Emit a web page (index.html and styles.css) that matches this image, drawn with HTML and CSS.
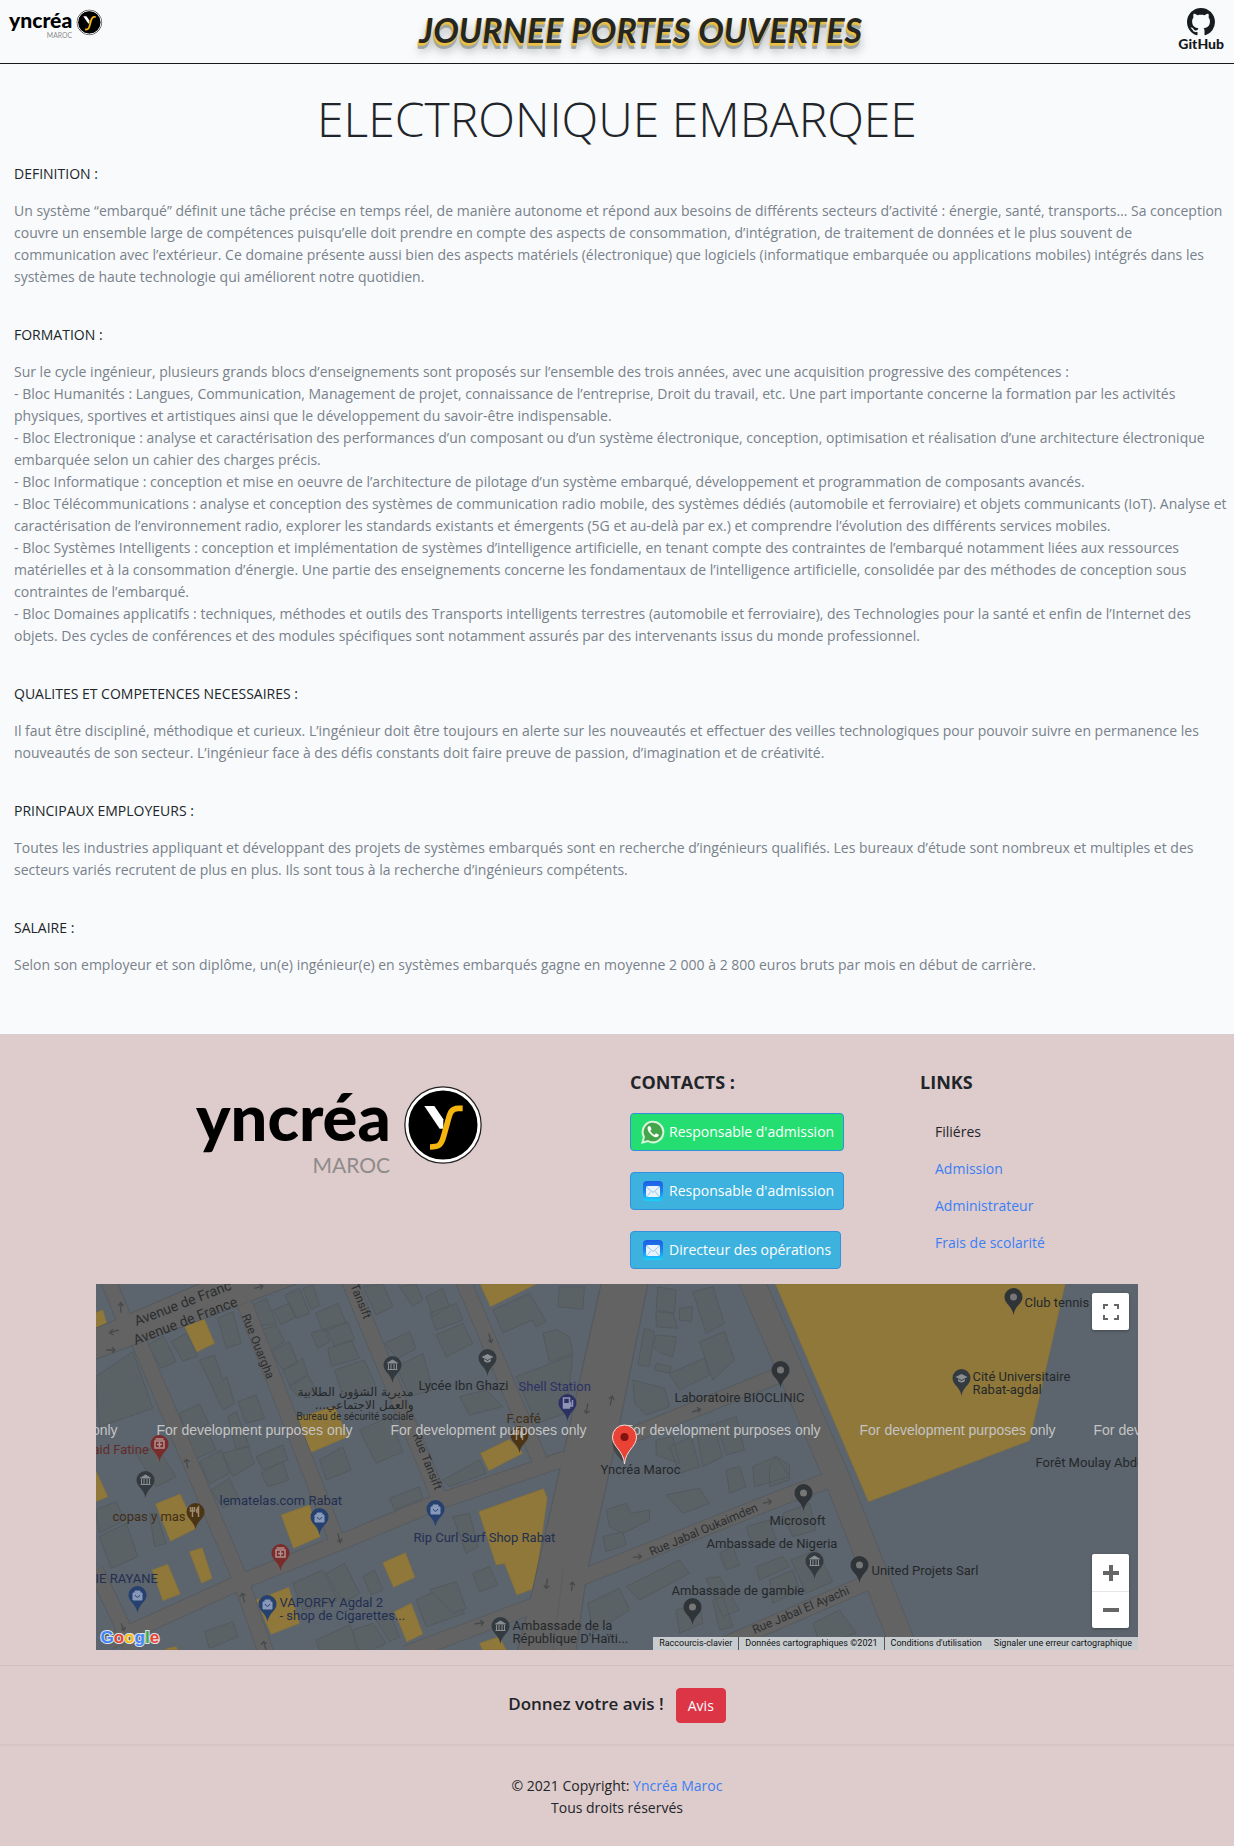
FILE: index.html
```html
<!DOCTYPE html>
<html lang="fr">
<head>
<meta charset="utf-8">
<meta name="viewport" content="width=device-width, initial-scale=1">
<title>Journée portes ouvertes - Yncréa Maroc</title>
<link rel="stylesheet" href="styles.css">
</head>
<body>
<svg class="defs" width="0" height="0" aria-hidden="true">
  <defs>
    <symbol id="yncrea" viewBox="0 0 292 92">
      <text class="brand-name" x="3" y="57">yncréa</text>
      <text class="brand-sub" x="197" y="89" text-anchor="end">MAROC</text>
      <circle cx="250" cy="41" r="38" fill="#000" stroke="#222" stroke-width="1.5"/>
      <circle cx="250" cy="41" r="36" fill="#000" stroke="#fff" stroke-width="3"/>
      <g transform="translate(-14 -24) scale(.33333)">
        <path d="M736 138H766L793 178V206H782Z" fill="#fff"/>
        <path d="M851 145H838C817 145 813 158 806 185L795 225C787 256 780 261 753 261" fill="none" stroke="#f5b40e" stroke-width="17"/>
      </g>
    </symbol>
    <symbol id="mail" viewBox="0 0 20 20">
      <rect width="20" height="20" rx="4" fill="url(#mail-bg)"/>
      <rect x="3" y="5" width="14" height="11" rx="2" fill="#e8f4fd"/>
      <path d="M3.500 6L10 11.500L16.500 6M4 15.500L8 10.500M16 15.500L12 10.500" fill="none" stroke="#9fc6e8"/>
    </symbol>
    <linearGradient id="mail-bg" x1="0" y1="0" x2="0" y2="1"><stop offset="0" stop-color="#1d5fe6"/><stop offset=".5" stop-color="#1c80ee"/><stop offset="1" stop-color="#1bd3fb"/></linearGradient>
    <path id="pin" d="M0 0C-1 -9 -9 -11 -9 -18a9 9 0 1 1 18 0C9 -11 1 -9 0 0z"/>
    <g id="pin-dot"><use href="#pin" fill="#2f3438"/><circle cy="-18" r="3.500" fill="#777"/></g>
    <g id="pin-bank"><use href="#pin" fill="#343b40"/><path d="M-5 -20L0 -23L5 -20ZM-4 -19V-14M-1.500 -19V-14M1.500 -19V-14M4 -19V-14M-5 -13.500H5" fill="#8a8f92" stroke="#8a8f92"/></g>
    <g id="pin-school"><use href="#pin" fill="#343b40"/><path d="M-6 -19L0 -22L6 -19L0 -16ZM-3.500 -17V-15Q0 -12 3.500 -15V-17L0 -15Z" fill="#8a8f92"/></g>
    <g id="pin-shop"><use href="#pin" fill="#26406f"/><path d="M-4.500 -20H4.500V-13H-4.500ZM-2.500 -20V-22H2.500V-20" fill="#8898b8" stroke="#8898b8"/><path d="M-2.500 -18Q0 -13.500 2.500 -18" fill="none" stroke="#26406f"/></g>
    <g id="pin-health"><use href="#pin" fill="#7a2c2a"/><path d="M-4.500 -14V-21H4.500V-14ZM0 -20V-15M-2.500 -17.500H2.500M-4 -23H4" fill="none" stroke="#b09090" stroke-width="1.500"/></g>
    <g id="pin-food"><use href="#pin" fill="#4c3514"/><path d="M-3 -23V-13M-5 -23V-19H-1V-23M3 -13V-23Q0 -20 2 -17" fill="none" stroke="#a08c70" stroke-width="1.500"/></g>
    <g id="pin-fuel"><use href="#pin" fill="#2c3163"/><path d="M-4 -13V-23H2V-13ZM3 -19V-15H5V-21" fill="none" stroke="#9094b4" stroke-width="1.500"/><path d="M-4 -18H2V-13H-4Z" fill="#9094b4"/></g>
  </defs>
</svg>

<header class="topbar">
  <a href="#" aria-label="Yncréa Maroc"><svg class="topbar-logo"><use href="#yncrea"/></svg></a>
  <div class="topbar-title">JOURNEE PORTES OUVERTES</div>
  <a class="github" href="#">
    <svg viewBox="0 0 16 16" width="28" height="28" aria-hidden="true"><path fill="#181b1f" d="M8 0C3.580 0 0 3.580 0 8c0 3.540 2.290 6.530 5.470 7.590.4.070.55-.17.55-.38 0-.19-.010-.82-.010-1.490-2.010.37-2.530-.49-2.690-.94-.090-.23-.48-.94-.82-1.130-.28-.15-.68-.52-.010-.53.63-.010 1.080.58 1.230.82.72 1.210 1.870.87 2.330.66.070-.52.28-.87.51-1.070-1.780-.2-3.640-.89-3.640-3.950 0-.87.31-1.590.82-2.150-.080-.2-.36-1.020.080-2.120 0 0 .67-.21 2.200.82.64-.18 1.320-.27 2-.27s1.360.090 2 .27c1.530-1.040 2.200-.82 2.200-.82.44 1.100.16 1.920.080 2.120.51.56.82 1.270.82 2.150 0 3.070-1.870 3.750-3.650 3.950.29.25.54.73.54 1.480 0 1.070-.010 1.930-.010 2.200 0 .21.15.46.55.38A8.010 8.010 0 0 0 16 8c0-4.420-3.580-8-8-8z"/></svg>
    <span>GitHub</span>
  </a>
</header>

<main class="content">
  <h1>ELECTRONIQUE EMBARQEE</h1>
  <section>
    <h2>DEFINITION :</h2>
    <p>Un système “embarqué” définit une tâche précise en temps réel, de manière autonome et répond aux besoins de différents secteurs d’activité : énergie, santé, transports… Sa conception couvre un ensemble large de compétences puisqu’elle doit prendre en compte des aspects de consommation, d’intégration, de traitement de données et le plus souvent de communication avec l’extérieur. Ce domaine présente aussi bien des aspects matériels (électronique) que logiciels (informatique embarquée ou applications mobiles) intégrés dans les systèmes de haute technologie qui améliorent notre quotidien.</p>
  </section>
  <section>
    <h2>FORMATION :</h2>
    <p>Sur le cycle ingénieur, plusieurs grands blocs d’enseignements sont proposés sur l’ensemble des trois années, avec une acquisition progressive des compétences :<br>
    - Bloc Humanités : Langues, Communication, Management de projet, connaissance de l’entreprise, Droit du travail, etc. Une part importante concerne la formation par les activités physiques, sportives et artistiques ainsi que le développement du savoir-être indispensable.<br>
    - Bloc Electronique : analyse et caractérisation des performances d’un composant ou d’un système électronique, conception, optimisation et réalisation d’une architecture électronique embarquée selon un cahier des charges précis.<br>
    - Bloc Informatique : conception et mise en oeuvre de l’architecture de pilotage d’un système embarqué, développement et programmation de composants avancés.<br>
    - Bloc Télécommunications : analyse et conception des systèmes de communication radio mobile, des systèmes dédiés (automobile et ferroviaire) et objets communicants (IoT). Analyse et caractérisation de l’environnement radio, explorer les standards existants et émergents (5G et au-delà par ex.) et comprendre l’évolution des différents services mobiles.<br>
    - Bloc Systèmes Intelligents : conception et implémentation de systèmes d’intelligence artificielle, en tenant compte des contraintes de l’embarqué notamment liées aux ressources matérielles et à la consommation d’énergie. Une partie des enseignements concerne les fondamentaux de l’intelligence artificielle, consolidée par des méthodes de conception sous contraintes de l’embarqué.<br>
    - Bloc Domaines applicatifs : techniques, méthodes et outils des Transports intelligents terrestres (automobile et ferroviaire), des Technologies pour la santé et enfin de l’Internet des objets. Des cycles de conférences et des modules spécifiques sont notamment assurés par des intervenants issus du monde professionnel.</p>
  </section>
  <section>
    <h2>QUALITES ET COMPETENCES NECESSAIRES :</h2>
    <p>Il faut être discipliné, méthodique et curieux. L’ingénieur doit être toujours en alerte sur les nouveautés et effectuer des veilles technologiques pour pouvoir suivre en permanence les nouveautés de son secteur. L’ingénieur face à des défis constants doit faire preuve de passion, d’imagination et de créativité.</p>
  </section>
  <section>
    <h2>PRINCIPAUX EMPLOYEURS :</h2>
    <p>Toutes les industries appliquant et développant des projets de systèmes embarqués sont en recherche d’ingénieurs qualifiés. Les bureaux d’étude sont nombreux et multiples et des secteurs variés recrutent de plus en plus. Ils sont tous à la recherche d’ingénieurs compétents.</p>
  </section>
  <section>
    <h2>SALAIRE :</h2>
    <p>Selon son employeur et son diplôme, un(e) ingénieur(e) en systèmes embarqués gagne en moyenne 2 000 à 2 800 euros bruts par mois en début de carrière.</p>
  </section>
</main>

<footer class="footer">
  <div class="footer-grid">
    <svg class="footer-logo" role="img" aria-label="Yncréa Maroc"><use href="#yncrea"/></svg>
    <div class="contacts">
      <h3>CONTACTS :</h3>
      <button class="btn btn-whatsapp" type="button">
        <svg width="24" height="24" viewBox="0 0 24 24" aria-hidden="true"><path d="M1.500 22.500L3 17A10.300 10.300 0 1 1 7 21Z" fill="#43a64b" stroke="#d9f3dc" stroke-width="2"/><path d="M8 6C6 7 6 10 9 13.500C12 17 15 18 17 16.500C18 15.500 18 15 17.500 14.500L15 13.300L13.500 15C12 14.500 10 12.500 9.300 10.800L10.500 9.200L9.500 6.500Z" fill="#fff"/></svg>
        Responsable d'admission</button>
      <button class="btn btn-mail" type="button"><svg width="20" height="20" aria-hidden="true"><use href="#mail"/></svg>Responsable d'admission</button>
      <button class="btn btn-mail" type="button"><svg width="20" height="20" aria-hidden="true"><use href="#mail"/></svg>Directeur des opérations</button>
    </div>
    <nav class="links">
      <h3>LINKS</h3>
      <ul>
        <li>Filiéres</li>
        <li><a href="#">Admission</a></li>
        <li><a href="#">Administrateur</a></li>
        <li><a href="#">Frais de scolarité</a></li>
      </ul>
    </nav>
  </div>

  <div class="map">
    <svg class="map-canvas" viewBox="0 0 1043 366" preserveAspectRatio="xMidYMid slice">
      <g transform="translate(-6 -4) scale(.33333)">
        <g class="buildings">
          <path d="M18 290L130 215L190 385L30 440ZM175 195L222 168L260 245L215 265ZM245 185L290 160L325 228L280 243ZM385 115L430 95L455 190L410 205ZM330 240L375 225L400 300L412 290L435 370L400 390ZM270 400L330 372L358 430L290 460ZM280 470L345 435L380 510L310 540ZM415 410L440 395L480 500L440 510ZM445 365L500 345L525 415L470 430ZM330 545L395 510L420 580L360 612ZM400 520L475 498L495 550L430 590ZM500 530L580 495L595 540L520 570ZM515 580L580 545L598 600L535 620ZM365 630L420 595L450 660L400 685ZM140 520L200 500L260 590L200 620ZM18 690L80 665L105 720L30 760ZM30 770L110 730L145 830L65 865ZM180 700L200 700L230 790L195 800Z"/>
          <path d="M480 80L530 55L560 130L500 140ZM550 90L600 70L620 110L575 135ZM585 45L630 25L660 100L620 115ZM640 25L670 15L690 75L665 90ZM515 150L560 135L585 185L545 210ZM545 215L600 185L625 250L580 270ZM580 270L640 235L655 285L600 315ZM600 320L655 285L680 330L625 350ZM678 100L745 70L770 130L700 155ZM665 160L705 145L720 185L685 205ZM710 145L775 125L795 180L735 200ZM715 205L785 180L810 235L725 258ZM735 270L825 240L860 320L760 350ZM820 20L880 12L910 80L860 105ZM885 190L960 155L980 205L925 235ZM920 260L1000 220L1030 330L960 350ZM930 20L980 12L1000 60L970 80ZM1010 50L1060 25L1080 80L1030 110ZM1020 100L1100 70L1120 120L1040 150ZM1040 165L1120 130L1150 190L1070 230ZM810 450L900 410L940 515L860 550ZM690 540L760 500L785 570L710 600ZM900 655L990 620L1000 655L915 690ZM610 910L700 870L745 960L640 990ZM710 880L765 850L810 940L760 970ZM820 890L855 870L880 930L845 945ZM345 1055L430 1025L445 1070L360 1105ZM680 1080L780 1035L810 1110H690ZM790 1050L850 1030L890 1090L850 1110H800ZM860 1020L900 1000L930 1070L900 1085ZM980 960L1080 915L1125 1000L1010 1040Z"/>
          <path d="M1210 90L1320 40L1370 125L1340 140L1330 120L1240 158ZM1410 20H1485L1480 88L1405 80ZM1360 160L1400 148L1440 170L1450 220L1380 245ZM1280 290L1450 225L1430 400L1340 430ZM1110 350L1190 330L1240 380L1140 405ZM1060 600L1170 540L1190 580L1080 620ZM1090 710L1140 700L1165 800L1130 820ZM1150 880L1200 860L1225 915L1170 935ZM1020 930L1100 905L1130 985L1090 1000ZM1705 20L1760 30L1755 100L1700 90ZM1700 95L1750 100L1765 145L1700 140ZM1770 85L1810 80L1805 125L1770 120ZM1810 35L1870 20L1905 130L1850 160ZM1665 145L1695 155L1680 260L1645 255ZM1700 165L1760 170L1750 230L1715 220L1690 200ZM1700 250L1745 260L1740 280L1695 270ZM1740 280L1845 235L1860 285L1770 330ZM1830 185L1905 155L1935 240L1870 300ZM1630 300L1725 325L1740 380L1670 405L1635 370ZM1700 480L1750 470L1770 550L1700 525ZM1740 500L1805 470L1830 560L1770 580ZM1820 450L1870 430L1900 530L1840 560ZM1880 430L1940 410L1965 510L1910 525ZM1910 570L1950 560L1970 620L1920 640ZM1990 560L2060 530L2100 590L1995 620ZM1730 645L1830 625L1860 670L1780 700ZM1550 690L1610 670L1625 700L1680 690V720L1600 760L1560 740ZM1540 770L1600 755L1610 795L1550 815ZM1495 970L1590 925L1620 990L1510 1060ZM1610 920L1770 840L1800 880L1650 960ZM1850 895L1890 890L1950 990L1900 1010ZM1870 960L1900 950L1930 1040L1890 1050ZM1760 990L1830 970L1840 1030L1770 1060ZM1970 740L2040 720L2060 780L1990 800ZM1890 820L1930 800L1950 855L1910 870ZM2000 860L2080 830L2100 860L2010 900ZM2040 900L2110 870L2130 930L2050 970ZM2040 560L2060 530L2100 555V600L2040 620ZM2080 700L2160 670L2180 750L2110 770ZM2105 840L2180 810L2230 905L2150 940ZM2170 1030L2250 990L2300 1060L2190 1090Z"/>
        </g>
        <g class="yellow">
          <path d="M18 98L40 90L52 130L18 148ZM286 140L342 112L375 190L322 216ZM18 570L55 650L18 665ZM198 672L272 642L320 745L243 784ZM300 815L338 803L368 895L336 910ZM188 870L235 853L272 942L220 962ZM575 705L660 675L692 770L612 805ZM618 415L735 380L775 470L662 518ZM500 960L598 922L630 1030L545 1063ZM880 848L948 818L976 892L912 922ZM915 995L965 970L1000 1062L952 1085ZM235 1105L260 1100L265 1110H225Z"/>
          <path d="M1172 12H1340L1203 80ZM1173 520L1260 478L1300 520L1198 572ZM1168 695L1362 626L1373 655L1335 925L1282 945L1245 850L1220 855ZM1170 1090L1230 1070L1250 1110H1180Z"/>
          <path d="M2058 12H2927L2820 482L2337 665Z"/>
        </g>
        <g class="road-edge">
          <path d="M18 145L330 12H620L18 238Z"/>
          <path d="M1535 12H1675L1580 480L1490 890L1460 1110H1285L1320 970L1420 530Z"/>
        </g>
        <g class="roads roads-edge-line">
          <path d="M55 0L105 120M150 190L455 905L530 1120M465 70L745 790M778 0L1060 680M1120 0L1350 540M18 870L105 1050L130 1120M60 1085L455 905L745 790L1060 660L1430 535M950 1120L1350 970M1590 480L2120 265M1470 895L2070 655L2220 600M1890 1100L2340 905"/>
          <path class="wide" d="M1985 0L2245 600L2450 1120"/>
        </g>
        <g class="roads">
          <path d="M55 0L105 120M150 190L455 905L530 1120M465 70L745 790M778 0L1060 680M1120 0L1350 540M18 870L105 1050L130 1120M60 1085L455 905L745 790L1060 660L1430 535M950 1120L1350 970M1590 480L2120 265M1470 895L2070 655L2220 600M1890 1100L2340 905"/>
          <path class="wide" d="M1985 0L2245 600L2450 1120"/>
        </g>
        <g class="road-fill"><path d="M18 147L334 12H616L18 236Z"/><path d="M1537 12H1673L1578 480L1488 890L1458 1110H1287L1322 970L1422 530Z"/></g>
        <path class="road-seam" d="M1422 870L1390 1110"/>
        <g class="arrows">
          <path d="M94 98V68M86 78L94 68L102 78M88 150L60 158M70 148L60 158L72 165M50 210H76M68 202L76 210L68 218M495 25L520 18M510 12L520 18L514 28M295 565L290 538M283 548L290 538L300 545M745 760L752 788M744 780L752 788L758 776M95 1030L103 1052M95 1046L103 1052L108 1040M465 968L458 940M451 950L458 940L468 946M530 1110L522 1085M515 1094L522 1085L531 1091M1198 160L1205 188M1196 180L1205 188L1210 176M1495 370L1490 400M1484 390L1490 400L1500 393M1562 376L1568 348M1558 356L1568 348L1574 360M1808 396L1833 388M1822 382L1833 388L1826 398M2020 670L2045 664M2034 657L2045 664L2038 674M1630 832L1656 829M1645 822L1656 829L1647 838M1374 895L1370 925M1363 915L1370 925L1380 918M1446 933L1449 906M1441 914L1449 906L1456 916M1155 1032L1182 1028M1172 1021L1182 1028L1174 1038"/>
        </g>
      </g>

      <g class="labels">
        <text class="road-name big" transform="translate(41 42) rotate(-21)">Avenue de Franc</text>
        <text class="road-name big" transform="translate(40 61) rotate(-21)">Avenue de France</text>
        <text class="road-name" transform="translate(146 32) rotate(68)">Rue Ouargha</text>
        <text class="road-name" transform="translate(246 -20) rotate(68)">Rue Tansift</text>
        <text class="road-name" transform="translate(317 151) rotate(68)">Rue Tansift</text>
        <text class="road-name" transform="translate(556 272) rotate(-23)">Rue Jabal Oukaimden</text>
        <text class="road-name" transform="translate(659 350) rotate(-23)">Rue Jabal El Ayachi</text>
        <text x="318" y="112" class="arabic" direction="rtl">مديرية الشؤون الطلابية</text>
        <text x="318" y="125" class="arabic" direction="rtl">والعمل الاجتماعي...</text>
        <text x="318" y="136" text-anchor="end" class="small">Bureau de sécurité sociale</text>
        <text x="323" y="106">Lycée Ibn Ghazi</text>
        <text x="423" y="107" class="indigo">Shell Station</text>
        <text x="411" y="139" class="brown">F.café</text>
        <text x="-3" y="170" class="red">aid Fatine</text>
        <text x="17" y="237" class="brown">copas y mas</text>
        <text x="124" y="221" class="blue">lematelas.com Rabat</text>
        <text x="0" y="299" class="blue">IE RAYANE</text>
        <text x="184" y="323" class="blue">VAPORFY Agdal 2</text>
        <text x="184" y="336" class="blue">- shop de Cigarettes...</text>
        <text x="318" y="258" class="blue">Rip Curl Surf Shop Rabat</text>
        <text x="417" y="346">Ambassade de la</text>
        <text x="417" y="359">République D'Haïti...</text>
        <text x="505" y="190">Yncréa Maroc</text>
        <text x="579" y="118">Laboratoire BIOCLINIC</text>
        <text x="674" y="241">Microsoft</text>
        <text x="611" y="264">Ambassade de Nigeria</text>
        <text x="576" y="311">Ambassade de gambie</text>
        <text x="776" y="291">United Projets Sarl</text>
        <text x="929" y="23">Club tennis</text>
        <text x="877" y="97">Cité Universitaire</text>
        <text x="877" y="110">Rabat-agdal</text>
        <text x="940" y="183">Forêt Moulay Abdellah</text>
      </g>
      <use href="#pin-bank" x="297" y="99"/><use href="#pin-bank" x="50" y="214"/><use href="#pin-bank" x="405" y="360"/><use href="#pin-bank" x="719" y="295"/>
      <use href="#pin-school" x="392" y="92"/><use href="#pin-school" x="866" y="112"/>
      <use href="#pin-dot" x="597" y="341"/><use href="#pin-dot" x="685" y="104"/><use href="#pin-dot" x="708" y="227"/><use href="#pin-dot" x="764" y="299"/><use href="#pin-dot" x="918" y="31"/>
      <use href="#pin-health" x="64" y="178"/><use href="#pin-health" x="185" y="287"/>
      <use href="#pin-food" x="100" y="246"/><use href="#pin-food" x="424" y="169"/>
      <use href="#pin-shop" x="42" y="329"/><use href="#pin-shop" x="224" y="251"/><use href="#pin-shop" x="340" y="243"/><use href="#pin-shop" x="172" y="338"/>
      <use href="#pin-fuel" x="472" y="137"/>
      <g class="watermark">
        <text x="-174" y="151">For development purposes only</text>
        <text x="61" y="151">For development purposes only</text>
        <text x="295" y="151">For development purposes only</text>
        <text x="529" y="151">For development purposes only</text>
        <text x="764" y="151">For development purposes only</text>
        <text x="998" y="151">For development purposes only</text>
      </g>
      <path d="M529 179C518 170 514 160 519 150L529 160Z" fill="#333" opacity=".6"/>
      <path d="M529 180C528 166 517 163 517 153a12 12 0 1 1 24 0C541 163 530 166 529 180Z" fill="#ea4335" stroke="#f5dcd8"/>
      <circle cx="529" cy="153" r="4" fill="#811411"/>
      <text class="google" x="5" y="359"><tspan fill="#4285f4">G</tspan><tspan fill="#ea4335">o</tspan><tspan fill="#fbbc05">o</tspan><tspan fill="#4285f4">g</tspan><tspan fill="#34a853">l</tspan><tspan fill="#ea4335">e</tspan></text>
    </svg>
    <button class="map-full" type="button" aria-label="Plein écran"><svg width="18" height="18" viewBox="0 0 18 18"><path d="M2 6V2H6M12 2H16V6M16 12V16H12M6 16H2V12" fill="none" stroke="#666" stroke-width="2"/></svg></button>
    <div class="map-zoom">
      <button type="button" aria-label="Zoom avant"><svg width="18" height="18" viewBox="0 0 18 18"><path d="M1 9H17M9 1V17" stroke="#666" stroke-width="4"/></svg></button>
      <button type="button" aria-label="Zoom arrière"><svg width="18" height="18" viewBox="0 0 18 18"><path d="M1 9H17" stroke="#666" stroke-width="4"/></svg></button>
    </div>
    <div class="map-legal">
      <a href="#">Raccourcis-clavier</a><span>Données cartographiques ©2021</span><a href="#">Conditions d'utilisation</a><a class="plain" href="#">Signaler une erreur cartographique</a>
    </div>
  </div>

  <div class="review">
    <span>Donnez votre avis !</span>
    <button class="btn btn-danger" type="button">Avis</button>
  </div>
  <div class="copyright">© 2021 Copyright: <a href="#">Yncréa Maroc</a><br>Tous droits réservés</div>
</footer>
</body>
</html>
```
FILE: styles.css
```css
* { box-sizing: border-box; }

body {
  margin: 0;
  background: #f8fafc;
  color: #212529;
  font-family: "Open Sans", "Noto Sans", sans-serif;
  font-size: 14px;
  line-height: 22px;
}

a { color: #3b7ff5; text-decoration: none; }
h1, h2, h3, p, ul { margin: 0; padding: 0; }
.defs { position: absolute; }

.brand-name { font: 900 65px Lato, sans-serif; fill: #000; }
.brand-sub { font: 400 21px Lato, sans-serif; fill: #8f8b8c; }

.topbar {
  display: flex;
  justify-content: space-between;
  align-items: flex-start;
  height: 64px;
  padding: 8px 10px 0 8px;
  border-bottom: 1px solid #16191c;
}
.topbar-logo { display: block; width: 95px; height: 32px; }
.topbar-title {
  font: italic 700 34px/44px Lato, sans-serif;
  color: #25261f;
  text-shadow: 0 1px 0 #e8c048, -1px 2px 0 #e8c048, -1px 3px 0 #d9b752, -1px 5px 0 #9da6a2, -1px 6px 0 #a5aca9, 0 8px 10px rgba(0, 0, 0, .35);
}
.github {
  display: flex;
  flex-direction: column;
  align-items: center;
  color: #16191c;
  font: 900 14px/16px Lato, sans-serif;
}

.content { padding: 23px 4px 58px 14px; }
.content h1 {
  margin-bottom: 12px;
  padding-right: 10px;
  font-size: 48px;
  font-weight: 300;
  line-height: 64px;
  text-align: center;
}
.content h2 { margin-bottom: 15px; font-size: 14px; font-weight: 400; line-height: 22px; }
.content section + section { margin-top: 36px; }
.content p { color: #79818a; }

.footer { background: #decbcb; border-top: 1px solid #d8cccd; }
.footer-grid {
  display: grid;
  grid-template-columns: 630fr 290fr 314fr;
  padding-top: 35px;
}
.footer-logo { width: 292px; height: 92px; margin-top: 14px; justify-self: center; margin-left: 48px; }
.footer h3 { font-size: 18px; font-weight: 700; line-height: 24px; }
.contacts { display: flex; flex-direction: column; align-items: flex-start; gap: 21px; padding-bottom: 15px; }

.btn {
  display: inline-flex;
  align-items: center;
  border: 1px solid #3490dc;
  border-radius: 4px;
  color: #fff;
  font: 14px/22px "Open Sans", "Noto Sans", sans-serif;
  cursor: pointer;
}
.contacts .btn { height: 38px; }
.btn-whatsapp { gap: 4px; margin-top: -2px; padding: 0 9px 0 10px; background: #25de72; }
.btn-mail { gap: 6px; padding: 0 9px 0 12px; background: #3db2de; }
.btn-danger { height: 35px; padding: 0 11px; background: #dc3546; border-color: #dc3546; }

.links ul { margin-top: 20px; padding-left: 15px; list-style: none; }
.links li { padding: 7px 0; margin-bottom: 1px; }

.map { position: relative; height: 366px; margin: 0 96px; overflow: hidden; background: #5c646d; }
.map-canvas { display: block; width: 100%; height: 100%; }
.buildings { fill: #5b6266; stroke: #535a5e; stroke-width: 3; }
.yellow { fill: #8f7839; stroke: #84713c; stroke-width: 2; }
.roads { fill: none; stroke: #636363; stroke-width: 44; }
.roads .wide { stroke-width: 74; }
.roads-edge-line { stroke: #565a5e; stroke-width: 49; }
.roads-edge-line .wide { stroke-width: 79; }
.road-edge { fill: #636363; stroke: #565a5e; stroke-width: 4; }
.road-fill { fill: #636363; }
.road-seam { stroke: #5a5d60; stroke-width: 3; }
.arrows { fill: none; stroke: #474a4c; stroke-width: 4; }
.labels text { font: 13px Roboto, sans-serif; fill: #24282b; }
.labels .road-name { font-size: 12px; fill: #2c2e30; }
.labels .big { font-size: 14px; }
.labels .small { font-size: 10px; }
.labels .arabic { font: 12px "DejaVu Sans", sans-serif; }
.labels .blue { fill: #222f52; }
.labels .indigo { fill: #2c3163; }
.labels .red { fill: #652a28; }
.labels .brown { fill: #3f2e18; }
.watermark { font: 14px "Liberation Sans", sans-serif; fill: #c4c4c4; }
.google { font: 700 17px "Liberation Sans", sans-serif; stroke: #dfe3e6; stroke-width: 2px; paint-order: stroke; }

.map-full, .map-zoom {
  position: absolute;
  right: 9px;
  width: 37px;
  background: #fff;
  border: 0;
  border-radius: 2px;
  box-shadow: 0 1px 3px rgba(0, 0, 0, .3);
}
.map-full { top: 9px; height: 37px; padding: 0; display: grid; place-items: center; }
.map-zoom { bottom: 22px; }
.map-zoom button { display: grid; place-items: center; width: 100%; height: 37px; padding: 0; border: 0; background: none; }
.map-zoom button + button { border-top: 1px solid #e6e6e6; }
.map-legal {
  position: absolute;
  right: 0;
  bottom: 0;
  display: flex;
  height: 13px;
  background: #c9cccf;
  font: 9px/13px Roboto, sans-serif;
}
.map-legal > * { padding: 0 6px; color: #111; border-left: 1px solid #555; }
.map-legal > :first-child, .map-legal .plain { border-left: 0; }

.review {
  display: flex;
  justify-content: center;
  align-items: center;
  gap: 12px;
  margin-top: 15px;
  padding: 22px 0 21px;
  border-top: 1px solid #d0c0c1;
  border-bottom: 2px solid #d5c5c6;
}
.review span { font-size: 17px; font-weight: 600; line-height: 22px; padding-bottom: 4px; }
.copyright { padding: 29px 0 27px; text-align: center; }
```
